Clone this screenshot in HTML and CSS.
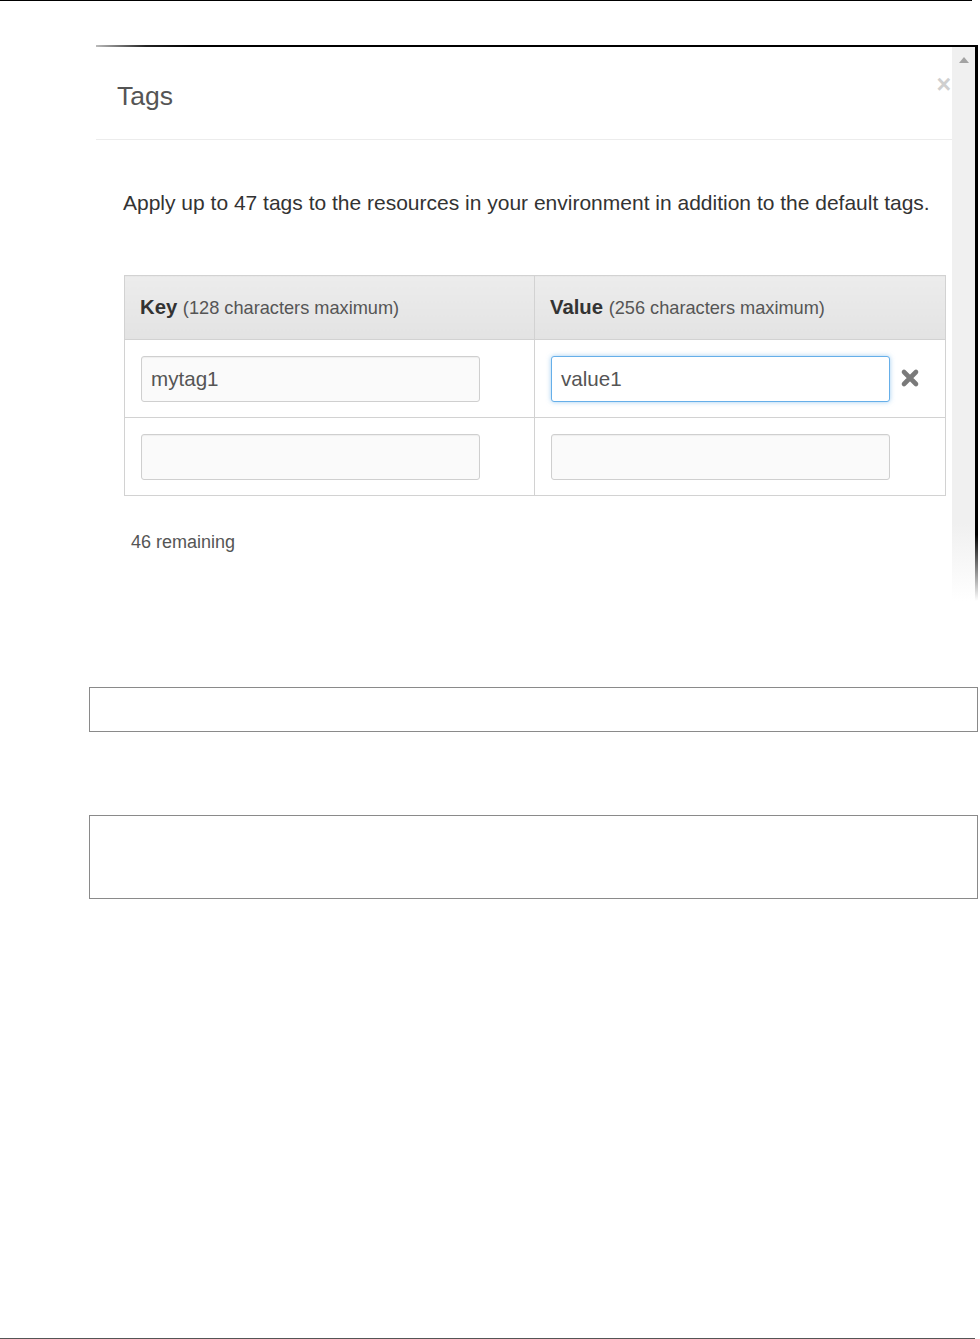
FILE: index.html
```html
<!DOCTYPE html>
<html>
<head>
<meta charset="utf-8">
<link rel="stylesheet" href="styles.css">
</head>
<body>
<div class="page">
  <div class="topline"></div>
  <div class="shot">
    <div class="shot-top"></div>
    <div class="shot-body">
      <div class="modal">
        <div class="modal-header">
          <h2 class="modal-title">Tags</h2>
          <span class="close">×</span>
        </div>
        <div class="modal-content">
          <p class="intro">Apply up to 47 tags to the resources in your environment in addition to the default tags.</p>
          <table class="tags">
            <thead>
              <tr>
                <th class="col-key"><b>Key</b> <span class="hint">(128 characters maximum)</span></th>
                <th class="col-val"><b>Value</b> <span class="hint">(256 characters maximum)</span></th>
              </tr>
            </thead>
            <tbody>
              <tr>
                <td><div class="input">mytag1</div></td>
                <td><div class="val-cell"><div class="input focus">value1</div>
                  <svg class="remove" width="20" height="20" viewBox="0 0 20 20"><path d="M4 4L16 16M16 4L4 16" stroke="#7a7a7a" stroke-width="4.6" stroke-linecap="round"/></svg></div></td>
              </tr>
              <tr>
                <td><div class="input"></div></td>
                <td><div class="val-cell"><div class="input"></div><span class="remove-space"></span></div></td>
              </tr>
            </tbody>
          </table>
          <div class="remaining">46 remaining</div>
        </div>
      </div>
      <div class="scrollbar"><span class="arrow"></span></div>
      <div class="edge"></div>
    </div>
  </div>
  <div class="box box-1"></div>
  <div class="box box-2"></div>
  <div class="bottomline"></div>
</div>
</body>
</html>
```
FILE: styles.css
```css
html, body {
  margin: 0;
  padding: 0;
  background: #fff;
}
body {
  font-family: "Liberation Sans", Arial, sans-serif;
}
.page {
  height: 1339px;
  display: flex;
  flex-direction: column;
}
.topline {
  width: 972px;
  height: 1px;
  background: #000;
}
.shot {
  margin-top: 44px;
  margin-left: 96px;
  width: 882px;
  height: 556px;
  display: flex;
  flex-direction: column;
}
.shot-top {
  height: 2px;
  background: linear-gradient(to right, #bbb 0, #222 50px, #000 100px);
  flex: none;
}
.shot-body {
  flex: 1;
  display: flex;
  min-height: 0;
}
.modal {
  width: 856px;
  flex: none;
  background: #fff;
}
.modal-header {
  height: 92px;
  border-bottom: 1px solid #ececec;
  display: flex;
  align-items: flex-start;
  justify-content: space-between;
}
.modal-title {
  margin: 34px 0 0 21px;
  font-weight: normal;
  font-size: 26.5px;
  line-height: 30px;
  color: #555;
}
.close {
  margin: 23px 1px 0 0;
  font-size: 25px;
  font-weight: bold;
  line-height: 28px;
  color: #cfcfcf;
}
.modal-content {
  padding: 0 6px 0 28px;
}
.intro {
  margin: 50px 0 0 -1px;
  font-size: 21px;
  line-height: 26px;
  color: #333;
  white-space: nowrap;
}
.tags {
  margin-top: 59px;
  width: 822px;
  border-collapse: collapse;
  border: 1px solid #d2d2d2;
}
.tags th {
  height: 63px;
  padding: 0 15px;
  text-align: left;
  background: linear-gradient(#ececec, #e3e3e3);
  border: 1px solid #d2d2d2;
  font-size: 20.3px;
  line-height: 24px;
  color: #333;
  font-weight: normal;
}
.tags th b {
  font-weight: bold;
}
.tags .hint {
  font-size: 18.2px;
  color: #555;
}
.col-key {
  width: 379px;
}
.tags td {
  height: 77px;
  padding: 0 15px 0 16px;
  border: 1px solid #d2d2d2;
  vertical-align: middle;
}
.input {
  box-sizing: border-box;
  width: 339px;
  height: 46px;
  border: 1px solid #cfcfcf;
  border-radius: 3px;
  background: #fafafa;
  box-shadow: inset 0 1px 1px rgba(0,0,0,0.05);
  padding: 0 9px;
  font-size: 20.6px;
  line-height: 44px;
  color: #555;
}
.input.focus {
  background: #fff;
  border-color: #66afe9;
  box-shadow: 0 0 5px rgba(102,175,233,0.6);
}
.val-cell {
  display: flex;
  align-items: center;
  gap: 10px;
}
.remove {
  flex: none;
  margin-top: -2px;
}
.remove-space {
  width: 20px;
}
.remaining {
  margin: 35px 0 0 7px;
  font-size: 18px;
  line-height: 22px;
  color: #555;
}
.scrollbar {
  width: 23px;
  flex: none;
  background: linear-gradient(#f0f0f0 0, #f0f0f0 86%, #fff 100%);
  display: flex;
  justify-content: center;
}
.arrow {
  margin-top: 10px;
  width: 0;
  height: 0;
  border-left: 5px solid transparent;
  border-right: 5px solid transparent;
  border-bottom: 6px solid #a3a3a3;
}
.edge {
  width: 3px;
  flex: none;
  background: linear-gradient(#000 0, #000 88%, #fff 100%);
}
.box {
  margin-left: 89px;
  width: 889px;
  box-sizing: border-box;
  border: 1px solid #8a8a8a;
  flex: none;
}
.box-1 {
  margin-top: 86px;
  height: 45px;
}
.box-2 {
  margin-top: 83px;
  height: 84px;
}
.bottomline {
  margin-top: auto;
  width: 975px;
  height: 1px;
  background: #555;
}
```
